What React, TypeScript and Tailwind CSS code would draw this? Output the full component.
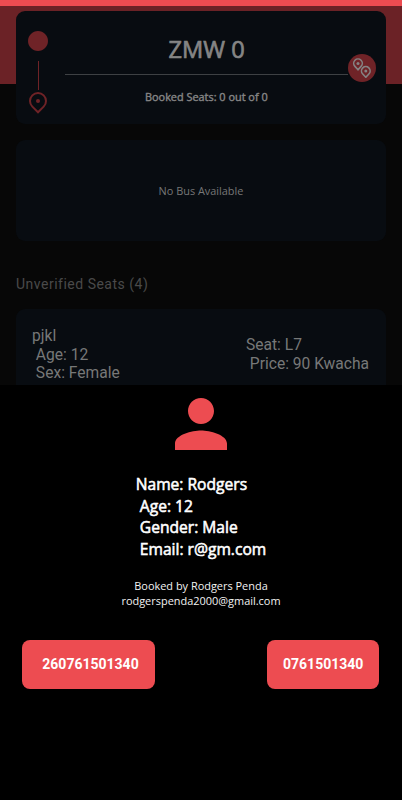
import { MdPerson } from "react-icons/md";
import { RiCheckboxBlankCircleFill } from "react-icons/ri";

const phones = ["260761501340", "0761501340"];

const PinIcon = () => (
  <svg width="24" height="24" viewBox="0 0 24 24" fill="none">
    <path d="M12 22.3 6.34 16.66a8 8 0 1 1 11.32 0Z" stroke="currentColor" strokeWidth="2" />
    <circle cx="12" cy="11" r="2" fill="currentColor" />
  </svg>
);

const PinsIcon = () => (
  <svg width="20" height="20" viewBox="0 0 20 20" fill="none" stroke="#858383" strokeWidth="1.6">
    <path d="M6 11.8 2.95 8.35a4.3 4.3 0 1 1 6.1 0Z" />
    <circle cx="6" cy="5.4" r="1.5" fill="#858383" stroke="none" />
    <path d="M13.8 19.3 10.75 15.95a4.3 4.3 0 1 1 6.1 0Z" />
    <circle cx="13.8" cy="13" r="1.5" fill="#858383" stroke="none" />
  </svg>
);

const RouteCard = () => (
  <section className="flex h-[113px] rounded-[9px] bg-[#080c11]">
    <div className="flex w-[45px] flex-col items-center pr-px pt-[18px] text-[#6f2327]">
      <RiCheckboxBlankCircleFill size={24} />
      <div className="mt-2 ml-px h-[29px] w-px bg-[#6f2327]"></div>
      <PinIcon />
    </div>

    <div className="flex grow flex-col pl-1 text-[#858585]">
      <h1 className="flex h-[63px] items-center pl-[103.5px] pt-[15px] text-[23.6px] whitespace-nowrap [-webkit-text-stroke:0.7px_#858585]">
        ZMW 0
      </h1>
      <div className="flex h-0 items-center">
        <div className="h-px grow bg-[#3e4144]"></div>
        <div className="mt-[-13px] mr-[10px] flex h-7 w-7 shrink-0 items-center justify-center rounded-full bg-[#6f2327]">
          <PinsIcon />
        </div>
      </div>
      <p className="pl-20 pt-[15px] text-[10.9px] leading-4 whitespace-nowrap [-webkit-text-stroke:0.4px_#858585]">
        Booked Seats: 0 out of 0
      </p>
    </div>
  </section>
);

const SeatCard = () => (
  <section className="flex h-[120px] justify-between rounded-[9px] bg-[#080c11] pl-4 pr-[17px] font-['Roboto',sans-serif] text-[15.6px] leading-[18.5px] whitespace-pre text-[#777878]">
    <p className="pt-[18px]">{"pjkl\n Age: 12\n Sex: Female"}</p>
    <p className="pt-[27px]">{"Seat: L7\n Price: 90 Kwacha"}</p>
  </section>
);

const ContactSheet = () => (
  <div className="absolute inset-x-0 bottom-0 flex h-[415px] flex-col items-center bg-black text-white">
    <MdPerson size={78} className="shrink-0 text-[#ed4c51]" />

    <p className="mt-[11px] text-[15.6px] leading-[21.5px] whitespace-pre [-webkit-text-stroke:0.55px_white]">
      {"Name: Rodgers\n Age: 12\n Gender: Male\n Email: r@gm.com"}
    </p>

    <p className="mt-[19px] text-center text-[10.95px] leading-[14.5px] text-[#f2f2f2]">
      Booked by Rodgers Penda
      <br />
      rodgerspenda2000@gmail.com
    </p>

    <div className="mt-8 flex w-full justify-between pl-[22px] pr-[23px] font-['Roboto',sans-serif]">
      {phones.map((phone) => (
        <button
          key={phone}
          className="h-[49px] rounded-lg bg-[#ed4c51] px-4 text-[14px] font-bold first:w-[133px] first:pl-5 last:w-[112px]"
        >
          {phone}
        </button>
      ))}
    </div>
  </div>
);

const App = () => {
  return (
    <div className="relative h-[800px] w-full overflow-hidden bg-[#070707] font-['Open_Sans',sans-serif]">
      <div className="h-1.5 bg-[#ed4c51]"></div>
      <div className="h-[78px] bg-[#6b2226]"></div>

      <main className="relative mt-[-73px] px-4">
        <RouteCard />

        <section className="mt-4 flex h-[101px] items-center justify-center rounded-[9px] bg-[#080c11] pt-0.5 text-[10.9px] text-[#777777]">
          No Bus Available
        </section>

        <h2 className="flex h-[68px] items-center pt-[18px] font-['Roboto',sans-serif] text-[14px] tracking-[0.5px] text-[#4a4a4a]">
          Unverified Seats (4)
        </h2>

        <SeatCard />
      </main>

      <ContactSheet />
    </div>
  );
};

export default App;
